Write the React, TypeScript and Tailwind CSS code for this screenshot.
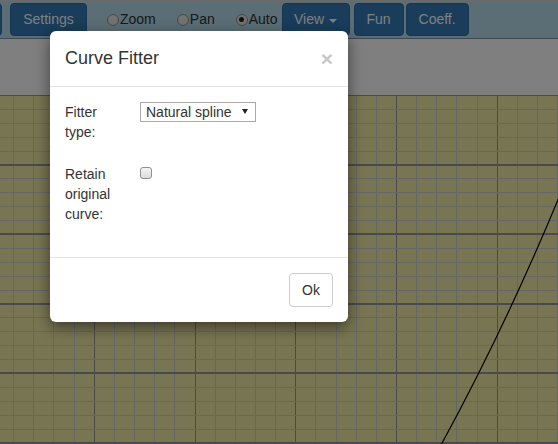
import React from "react";

// plot area behind the dialog
function Grid() {
  const w = 558;
  const h = 349;
  const vx: number[] = [];
  for (let i = 0; i < 30; i++) vx.push(-7 + i * 20.15);
  const hy: number[] = [];
  for (let i = 0; i < 27; i++) hy.push(i * 13.9);

  return (
    <svg width={w} height={h} className="block" shapeRendering="crispEdges">
      <rect width={w} height={h} fill="#f0eaa4" />
      {vx.map((x, i) => (
        <line
          key={"v" + i}
          x1={Math.round(x) + 0.5}
          x2={Math.round(x) + 0.5}
          y1={0}
          y2={h}
          stroke={i % 5 === 0 ? "#949494" : "#cdcdc8"}
          strokeWidth={1}
        />
      ))}
      {hy.map((y, i) => (
        <line
          key={"h" + i}
          y1={Math.round(y) + (i % 5 === 0 ? 0 : 0.5)}
          y2={Math.round(y) + (i % 5 === 0 ? 0 : 0.5)}
          x1={0}
          x2={w}
          stroke={i % 5 === 0 ? "#949494" : "#cdcdc8"}
          strokeWidth={i % 5 === 0 ? 2 : 1}
        />
      ))}
      <path
        d="M 441 350 Q 507 229 562 95"
        fill="none"
        stroke="#000"
        strokeWidth={1.2}
        shapeRendering="geometricPrecision"
      />
    </svg>
  );
}

function Radio({ label, checked }: { label: string; checked?: boolean }) {
  return (
    <label className="flex items-center text-[14px] text-[#333]">
      <span className="flex h-[12px] w-[12px] items-center justify-center rounded-full border border-[#8f8f8f] bg-[#e6e6e6]">
        {checked && <span className="h-[5px] w-[5px] rounded-full bg-[#222]" />}
      </span>
      <span className="ml-[1px]">{label}</span>
    </label>
  );
}

function BarButton({ children, className = "" }: { children: React.ReactNode; className?: string }) {
  return (
    <button
      className={
        "h-[33px] rounded-[4px] border border-[#2e6da4] bg-[#337ab7] px-[12px] text-[14px] text-white " +
        className
      }
    >
      {children}
    </button>
  );
}

export default function App() {
  return (
    <div className="relative h-[444px] w-[558px] overflow-hidden font-['Liberation_Sans',Arial,sans-serif]">
      <div className="h-[2px] bg-[#d4d4d4]" />
      <div className="flex h-[37px] items-start border-b border-[#7a949e] bg-[#b6dcea] pt-[1px]">
        <BarButton className="-ml-[60px] w-[62px]">&nbsp;</BarButton>
        <BarButton className="ml-[8px] w-[77px]">Settings</BarButton>
        <div className="ml-[20px] flex h-[33px] items-center gap-[21px]">
          <Radio label="Zoom" />
          <Radio label="Pan" />
          <Radio label="Auto" checked />
        </div>
        <BarButton className="ml-[4px] flex w-[68px] items-center justify-center gap-[5px]">
          View
          <span className="mt-[2px] h-0 w-0 border-x-[4px] border-t-[4px] border-x-transparent border-t-white" />
        </BarButton>
        <BarButton className="ml-[4px] w-[50px]">Fun</BarButton>
        <BarButton className="ml-[2px] w-[63px]">Coeff.</BarButton>
      </div>
      <div className="h-[56px] bg-white" />
      <Grid />

      <div className="absolute inset-0 bg-black/50" />

      <div
        role="dialog"
        className="absolute left-[50px] top-[31px] w-[298px] rounded-[6px] bg-white text-[14px] leading-[20px] text-[#333] shadow-[0_5px_15px_rgba(0,0,0,0.5)]"
      >
        <div className="flex items-start justify-between border-b border-[#e5e5e5] px-[15px] py-[15px]">
          <h4 className="text-[18px] leading-[25px]">Curve Fitter</h4>
          <button className="mt-[2px] text-[21px] font-bold leading-[21px] text-[#c8c8c8]">×</button>
        </div>

        <div className="px-[15px] pb-[33px] pt-[15px]">
          <div className="mb-[22px] grid grid-cols-[75px_1fr]">
            <label>
              Fitter
              <br />
              type:
            </label>
            <div className="relative h-[20px] w-[116px]">
              <select className="h-[20px] w-[116px] appearance-none rounded-none border border-[#a9a9a9] bg-white pl-[5px] text-[14px] leading-[18px] text-[#333]">
                <option>Natural spline</option>
              </select>
              <span className="pointer-events-none absolute right-[8px] top-[7px] h-0 w-0 border-x-[3.5px] border-t-[5px] border-x-transparent border-t-[#222]" />
            </div>
          </div>
          <div className="grid grid-cols-[75px_1fr]">
            <label>
              Retain
              <br />
              original
              <br />
              curve:
            </label>
            <div className="pt-[3px]">
              <span className="block h-[12px] w-[12px] rounded-[3px] border border-[#8f8f8f] bg-gradient-to-b from-[#f4f4f4] to-[#dcdcdc]" />
            </div>
          </div>
        </div>

        <div className="flex justify-end border-t border-[#e5e5e5] p-[15px]">
          <button className="h-[34px] rounded-[4px] border border-[#ccc] bg-white px-[12px] text-[14px] text-[#333]">
            Ok
          </button>
        </div>
      </div>
    </div>
  );
}
